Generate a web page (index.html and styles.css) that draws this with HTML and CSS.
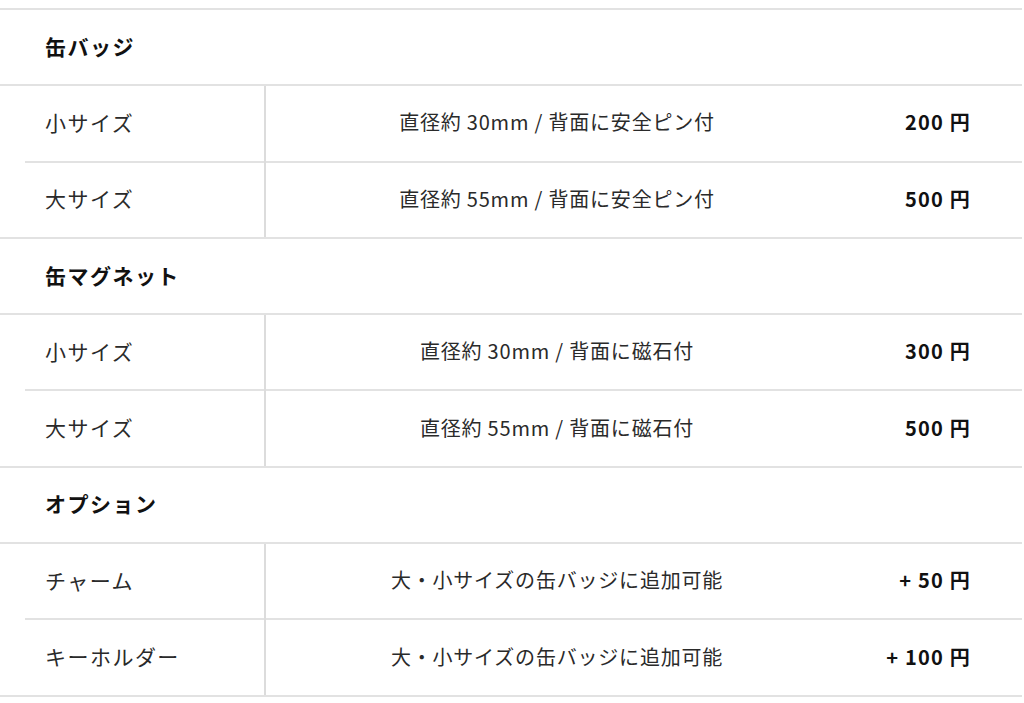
FILE: index.html
```html
<!DOCTYPE html>
<html lang="ja">
<head>
<meta charset="utf-8">
<title>価格表</title>
<link rel="stylesheet" href="styles.css">
</head>
<body>
<div class="table">
  <section class="group">
    <div class="group-title">缶バッジ</div>
    <div class="items">
      <div class="item"><div class="name">小サイズ</div><div class="desc">直径約 30mm / 背面に安全ピン付</div><div class="price">200 円</div></div>
      <div class="item"><div class="name">大サイズ</div><div class="desc">直径約 55mm / 背面に安全ピン付</div><div class="price">500 円</div></div>
    </div>
  </section>
  <section class="group">
    <div class="group-title">缶マグネット</div>
    <div class="items">
      <div class="item"><div class="name">小サイズ</div><div class="desc">直径約 30mm / 背面に磁石付</div><div class="price">300 円</div></div>
      <div class="item"><div class="name">大サイズ</div><div class="desc">直径約 55mm / 背面に磁石付</div><div class="price">500 円</div></div>
    </div>
  </section>
  <section class="group">
    <div class="group-title">オプション</div>
    <div class="items">
      <div class="item"><div class="name">チャーム</div><div class="desc">大・小サイズの缶バッジに追加可能</div><div class="price">+ 50 円</div></div>
      <div class="item"><div class="name">キーホルダー</div><div class="desc">大・小サイズの缶バッジに追加可能</div><div class="price">+ 100 円</div></div>
    </div>
  </section>
</div>
</body>
</html>
```
FILE: styles.css
```css
html, body {
  margin: 0;
  padding: 0;
  background: #fff;
}
body {
  font-family: "Noto Sans CJK JP", "Noto Sans", sans-serif;
  color: #2a2a2a;
  font-size: 20px;
}
.table {
  padding-top: 8px;
  margin-right: 2px;
  border-bottom: 2px solid #e2e2e2;
}
.group-title {
  box-sizing: border-box;
  height: 76.3px;
  border-top: 2px solid #e2e2e2;
  display: flex;
  align-items: center;
  padding-left: 45px;
  padding-bottom: 3px;
  font-size: 21px;
  font-weight: 700;
  letter-spacing: 0.07em;
  color: #111;
}
.items {
  border-top: 2px solid #e2e2e2;
}
.item {
  box-sizing: border-box;
  height: 76.3px;
  margin-left: 25px;
  display: grid;
  grid-template-columns: 241px 1fr 172px;
}
.item:first-child {
  height: 74.3px;
}
.item + .item {
  border-top: 2px solid #e2e2e2;
}
.name {
  display: flex;
  align-items: center;
  padding-left: 20px;
  padding-bottom: 3px;
  border-right: 2px solid #dcdcdc;
  font-size: 21px;
  letter-spacing: 0.07em;
}
.item + .item .name {
  margin-top: -2px;
  padding-top: 2px;
}
.desc {
  display: flex;
  align-items: center;
  justify-content: center;
  letter-spacing: 0.04em;
  padding-right: 2px;
  padding-bottom: 3px;
}
.price {
  display: flex;
  align-items: center;
  justify-content: flex-end;
  padding-right: 51px;
  padding-bottom: 3px;
  font-weight: 700;
  color: #111;
  letter-spacing: 0.06em;
}
```
